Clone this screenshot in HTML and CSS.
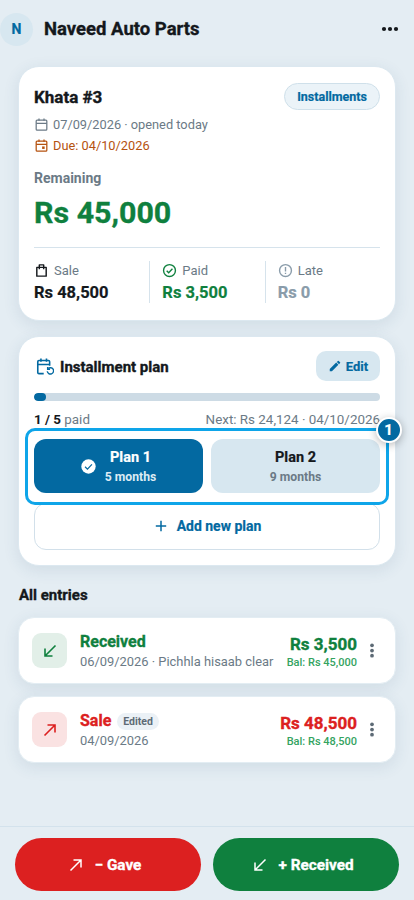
FILE: index.html
```html
<!DOCTYPE html>
<html lang="en">
<head>
<meta charset="utf-8">
<title>Naveed Auto Parts</title>
<link rel="stylesheet" href="styles.css">
</head>
<body>
<div class="screen">
  <header class="topbar">
    <div class="avatar">N</div>
    <h1 class="shop">Naveed Auto Parts</h1>
    <svg class="more" viewBox="0 0 18 6" aria-hidden="true"><circle cx="3" cy="3" r="2.1"/><circle cx="9" cy="3" r="2.1"/><circle cx="15" cy="3" r="2.1"/></svg>
  </header>

  <main class="content">
    <section class="card khata">
      <div class="khata-head">
        <h2 class="khata-title">Khata #3</h2>
        <span class="chip">Installments</span>
      </div>
      <div class="meta">
        <svg class="ico" viewBox="0 0 24 24" fill="none" stroke="#6b7a86" stroke-width="2"><rect x="3.500" y="5" width="17" height="16" rx="1.500"/><path d="M3.500 10h17M8 2.500V6M16 2.500V6"/></svg>
        <span>07/09/2026 · opened today</span>
      </div>
      <div class="meta due">
        <svg class="ico" viewBox="0 0 24 24" fill="none" stroke="#b5520f" stroke-width="2"><rect x="3.500" y="5" width="17" height="16" rx="1.500"/><path d="M3.500 10h17M8 2.500V6M16 2.500V6"/><rect x="13" y="13.500" width="4" height="4" fill="#b5520f" stroke="none"/></svg>
        <span>Due: 04/10/2026</span>
      </div>
      <div class="rem-label">Remaining</div>
      <div class="rem-value">Rs 45,000</div>
      <div class="stats">
        <div class="stat">
          <div class="stat-label">
            <svg class="ico" viewBox="0 0 24 24" fill="none" stroke="#14181c" stroke-width="2.300" stroke-linejoin="round"><path d="M4.500 7h15v14h-15z"/><path d="M8.500 10V3h7v7"/></svg>
            <span>Sale</span>
          </div>
          <div class="stat-value">Rs 48,500</div>
        </div>
        <div class="stat">
          <div class="stat-label">
            <svg class="ico" viewBox="0 0 24 24" fill="none" stroke="#0f803e" stroke-width="2.200"><circle cx="12" cy="12" r="9.500"/><path d="M7.500 12.300l3.200 3.200 6-6.200"/></svg>
            <span>Paid</span>
          </div>
          <div class="stat-value green">Rs 3,500</div>
        </div>
        <div class="stat">
          <div class="stat-label">
            <svg class="ico" viewBox="0 0 24 24" fill="none" stroke="#8a9caa" stroke-width="2.200"><circle cx="12" cy="12" r="9.500"/><path d="M12 6.500v7M12 15.500v2"/></svg>
            <span>Late</span>
          </div>
          <div class="stat-value muted">Rs 0</div>
        </div>
      </div>
    </section>

    <section class="card plan">
      <div class="plan-head">
        <svg class="plan-ico" viewBox="0 0 24 24" fill="none" stroke="#0369a1" stroke-width="2"><path d="M11 21H5a1.500 1.500 0 0 1-1.500-1.500V6A1.500 1.500 0 0 1 5 4.500h12A1.500 1.500 0 0 1 18.500 6v5"/><path d="M3.500 9.500h15M7.500 2v4M14.500 2v4"/><path d="M15.500 18a4 4 0 1 0 1.200-3.400" stroke-width="1.800"/><path d="M16 12.500v3h3" stroke-width="1.800"/></svg>
        <h3 class="plan-title">Installment plan</h3>
        <button class="edit" type="button">
          <svg class="edit-ico" viewBox="0 0 24 24" fill="#0369a1"><path d="M3 17.250V21h3.750L17.810 9.940l-3.750-3.750L3 17.250zM20.710 7.040a1 1 0 0 0 0-1.410l-2.340-2.340a1 1 0 0 0-1.410 0l-1.830 1.830 3.750 3.750 1.830-1.830z"/></svg>
          Edit
        </button>
      </div>
      <div class="track"><div class="fill" style="width:12px"></div></div>
      <div class="progress-text">
        <span class="paid"><b>1 / 5</b> paid</span>
        <span class="next">Next: Rs 24,124 · 04/10/2026</span>
      </div>
      <div class="focus">
        <span class="badge">1</span>
        <div class="plans">
          <button class="plan-opt active" type="button">
            <svg class="check" viewBox="0 0 24 24"><circle cx="12" cy="12" r="11.500" fill="#fff"/><path d="M6.500 12.500l3.800 3.700 7.200-7.700" fill="none" stroke="#0369a1" stroke-width="2"/></svg>
            <span class="opt-text"><span class="opt-name">Plan 1</span><span class="opt-sub">5 months</span></span>
          </button>
          <button class="plan-opt" type="button">
            <span class="opt-text"><span class="opt-name">Plan 2</span><span class="opt-sub">9 months</span></span>
          </button>
        </div>
      </div>
      <button class="add" type="button">
        <svg class="add-ico" viewBox="0 0 12 12" fill="none" stroke="#0369a1" stroke-width="1.500"><path d="M6 .8v10.400M.8 6h10.400"/></svg>
        Add new plan
      </button>
    </section>

    <h4 class="section-title">All entries</h4>

    <article class="card entry">
      <div class="tile tile-green">
        <svg viewBox="0 0 14 14" fill="none" stroke="#0f803e" stroke-width="1.600"><path d="M12.500 1.500L2 12M2 4.500V12h7.500"/></svg>
      </div>
      <div class="entry-main">
        <div class="entry-title green">Received</div>
        <div class="entry-sub">06/09/2026 · Pichhla hisaab clear</div>
      </div>
      <div class="entry-amt">
        <div class="amt green">Rs 3,500</div>
        <div class="bal">Bal: Rs 45,000</div>
      </div>
      <svg class="kebab" viewBox="0 0 6 16" fill="#5d6a75"><circle cx="3" cy="2.500" r="2"/><circle cx="3" cy="8" r="2"/><circle cx="3" cy="13.500" r="2"/></svg>
    </article>

    <article class="card entry">
      <div class="tile tile-red">
        <svg viewBox="0 0 14 14" fill="none" stroke="#dc2020" stroke-width="1.600"><path d="M1.500 12.500L12 2M4.500 2H12v7.500"/></svg>
      </div>
      <div class="entry-main">
        <div class="entry-title-row">
          <span class="entry-title red">Sale</span>
          <span class="tag">Edited</span>
        </div>
        <div class="entry-sub">04/09/2026</div>
      </div>
      <div class="entry-amt">
        <div class="amt red">Rs 48,500</div>
        <div class="bal">Bal: Rs 48,500</div>
      </div>
      <svg class="kebab" viewBox="0 0 6 16" fill="#5d6a75"><circle cx="3" cy="2.500" r="2"/><circle cx="3" cy="8" r="2"/><circle cx="3" cy="13.500" r="2"/></svg>
    </article>
  </main>

  <footer class="actions">
    <button class="action gave" type="button">
      <svg viewBox="0 0 14 14" fill="none" stroke="#fff" stroke-width="1.500"><path d="M1.500 12.500L12 2M4.500 2H12v7.500"/></svg>
      − Gave
    </button>
    <button class="action received" type="button">
      <svg viewBox="0 0 14 14" fill="none" stroke="#fff" stroke-width="1.500"><path d="M12.500 1.500L2 12M2 4.500V12h7.500"/></svg>
      + Received
    </button>
  </footer>
</div>
</body>
</html>
```
FILE: styles.css
```css
* { box-sizing: border-box; }
html, body { margin: 0; padding: 0; }
body { font-family: Roboto, "Noto Sans", sans-serif; color: #14181c; background: #e4edf3; }
button { font-family: inherit; border: 0; cursor: pointer; padding: 0; }
h1, h2, h3, h4 { margin: 0; }

.shop, .khata-title, .rem-value, .plan-title, .section-title, .action, .amt, .entry-title { -webkit-text-stroke: .35px currentColor; }
.avatar, .chip, .stat-value, .edit, .opt-name, .add, .badge { -webkit-text-stroke: .2px currentColor; }

.screen { width: 414px; height: 900px; display: flex; flex-direction: column; overflow: hidden; background: #e4edf3; }

.topbar { height: 58px; display: flex; align-items: center; padding-right: 16px; flex: none; }
.avatar { width: 33px; height: 33px; border-radius: 50%; background: #d7e7f0; color: #0369a1; font-weight: 700; font-size: 14px; display: flex; align-items: center; justify-content: center; margin-right: 11px; }
.shop { font-size: 18.500px; font-weight: 700; flex: 1; }
.more { width: 18px; height: 6px; fill: #14181c; margin-right: -1px; }

.content { flex: 1; padding: 8px 18px 0; }
.card { background: #fff; border: 1px solid #dce8f0; box-shadow: 0 4px 16px rgba(45, 85, 115, .11); }

.khata { height: 255px; border-radius: 21px; padding: 16px 15px 0; }
.khata-head { display: flex; align-items: center; justify-content: space-between; height: 27px; margin-bottom: 4px; }
.khata-title { font-size: 17px; font-weight: 700; }
.chip { height: 27px; padding: 0 12px; border-radius: 14px; background: #ebf3f8; border: 1px solid #cfe0ea; color: #0369a1; font-size: 12.500px; font-weight: 700; display: flex; align-items: center; }
.meta { display: flex; align-items: center; gap: 4px; font-size: 12.800px; color: #6b7a86; height: 21px; }
.due { color: #b5520f; }
.ico { width: 15px; height: 15px; flex: none; }
.rem-label { margin-top: 13px; font-size: 14px; font-weight: 700; color: #6b7a86; line-height: 18px; }
.rem-value { margin-top: 6px; font-size: 30.400px; font-weight: 700; color: #0f803e; line-height: 40px; }
.stats { margin-top: 14px; border-top: 1px solid #d6e3ec; padding-top: 13px; display: grid; grid-template-columns: repeat(3, 1fr); }
.stat + .stat { border-left: 1px solid #d6e3ec; padding-left: 12px; }
.stat-label { display: flex; align-items: center; gap: 5px; font-size: 13px; color: #6b7a86; height: 18px; }
.stat-value { margin-top: 4px; font-size: 16.500px; font-weight: 700; line-height: 20px; }
.green { color: #0f803e; }
.red { color: #dc2020; }
.stat-value.muted { color: #8a9caa; }

.plan { height: 230px; margin-top: 15px; border-radius: 21px; padding: 14px 15px 0; position: relative; }
.plan-head { display: flex; align-items: center; height: 30px; }
.plan-ico { width: 19px; height: 19px; margin-left: 1px; margin-right: 6px; }
.plan-title { flex: 1; padding-top: 1px; font-size: 15px; font-weight: 700; }
.edit { height: 30px; width: 64px; border-radius: 10px; background: #d7e7f0; color: #0369a1; font-size: 13px; font-weight: 700; display: flex; align-items: center; justify-content: center; gap: 4px; }
.edit-ico { width: 14px; height: 14px; }
.track { margin-top: 12px; height: 8px; border-radius: 4px; background: #cddbe5; overflow: hidden; }
.fill { height: 100%; border-radius: 4px; background: #0369a1; }
.progress-text { margin-top: 10px; display: flex; justify-content: space-between; font-size: 13.400px; color: #6b7a86; line-height: 18px; white-space: nowrap; }
.paid b { color: #14181c; font-weight: 700; }

.focus { position: relative; margin: -1px -9px 0; height: 77px; padding: 8px 6px; background: #fff; border: 3px solid #0ea5e9; border-radius: 10px; z-index: 1; }
.badge { position: absolute; top: -14px; right: -15.500px; width: 26px; height: 26px; border-radius: 50%; background: #0369a1; color: #fff; border: 2px solid #fff; font-size: 15px; font-weight: 700; display: flex; align-items: center; justify-content: center; box-shadow: 0 2px 8px rgba(0, 0, 0, .28); }
.plans { display: flex; gap: 8px; }
.plan-opt { flex: 1; height: 54px; padding-top: 2px; border-radius: 12px; background: #d7e7f0; color: #14181c; display: flex; align-items: center; justify-content: center; gap: 9px; }
.plan-opt.active { background: #0369a1; color: #fff; }
.check { width: 15px; height: 15px; margin-top: -2px; }
.opt-text { display: flex; flex-direction: column; align-items: center; }
.opt-name { font-size: 14.500px; font-weight: 700; line-height: 20px; }
.opt-sub { font-size: 12.200px; font-weight: 700; line-height: 18px; color: #6b7a86; }
.active .opt-sub { color: #dcebf4; }
.add { width: 100%; height: 47px; margin-top: -2px; padding: 0 0 2px 2px; background: #fff; border: 1px solid #d2e0ea; border-radius: 12px; color: #0369a1; font-size: 14px; font-weight: 700; display: flex; align-items: center; justify-content: center; gap: 10px; }
.add-ico { width: 12px; height: 12px; }

.section-title { margin-top: 20px; padding-left: 1px; font-size: 15px; font-weight: 700; line-height: 18px; }

.entry { height: 67px; margin-top: 12px; border-radius: 16px; display: flex; align-items: center; padding: 0 20px 0 13px; border-color: #e3edf3; }
.section-title + .entry { margin-top: 13px; }
.tile { width: 35px; height: 35px; border-radius: 9px; display: flex; align-items: center; justify-content: center; flex: none; margin-right: 13px; }
.tile svg { width: 14px; height: 14px; }
.tile-green { background: #e2efe8; }
.tile-red { background: #fae2e2; }
.entry-main { flex: 1; min-width: 0; padding-top: 2px; }
.entry-title { font-size: 16px; font-weight: 700; line-height: 20px; }
.entry-title-row { display: flex; align-items: center; gap: 6px; height: 20px; }
.entry-sub { margin-top: 1px; font-size: 12.900px; line-height: 18px; color: #6b7a86; white-space: nowrap; }
.tag { height: 17px; padding: 0 6px; border-radius: 9px; background: #ebf1f6; color: #5d6a75; font-size: 10.500px; font-weight: 700; display: flex; align-items: center; }
.entry-amt { text-align: right; margin-top: 3px; }
.amt { font-size: 17px; font-weight: 700; line-height: 21px; }
.bal { margin-top: 1px; font-size: 11px; font-weight: 500; line-height: 14px; color: #34a35f; }
.kebab { width: 6px; height: 15px; margin-left: 12px; flex: none; }

.actions { height: 74px; flex: none; border-top: 1px solid #d3e2ec; display: flex; gap: 12px; padding: 11px 15px 0; }
.action { flex: 1; height: 53px; padding-right: 6px; border-radius: 27px; color: #fff; font-size: 15.300px; font-weight: 700; display: flex; align-items: center; justify-content: center; gap: 12px; }
.action svg { width: 14px; height: 14px; }
.gave { background: #dc2020; }
.received { background: #0f803e; }
```
